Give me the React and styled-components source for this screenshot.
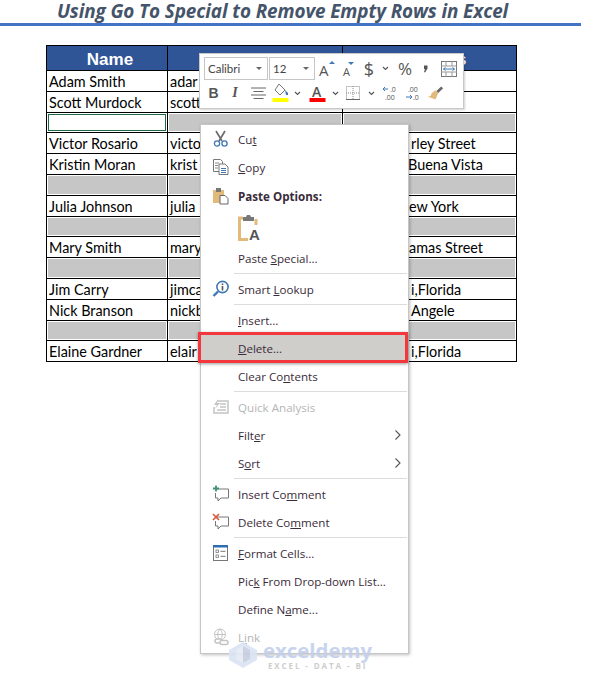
import React from "react";
import styled, { createGlobalStyle } from "styled-components";

const Global = createGlobalStyle`
  html, body { margin: 0; padding: 0; background: #fff; }
  body { width: 603px; height: 684px; overflow: hidden; }
`;

const Page = styled.div`
  position: relative;
  width: 603px;
  height: 684px;
  background: #fff;
`;

const Title = styled.h1`
  margin: 0;
  width: 565px;
  height: 23px;
  font: italic 700 18.9px/22px "Open Sans", sans-serif;
  color: #44546a;
  text-align: center;
  letter-spacing: -0.1px;
  white-space: nowrap;
`;

const TitleRule = styled.div`
  width: 581px;
  height: 3px;
  background: #4472c4;
`;

const Table = styled.div`
  margin: 19px 0 0 46px;
  width: 471px;
  border: 1px solid #000;
  border-bottom: 0;
  box-sizing: border-box;
  font: 400 14.4px "Lato", sans-serif;
  color: #000;
`;

const Row = styled.div`
  display: grid;
  grid-template-columns: 121px 175px 1fr;
  height: ${(p) => (p.$head ? "25px" : "20.8px")};
  box-sizing: border-box;
  border-bottom: 1px solid #000;
`;

const Cell = styled.div`
  display: flex;
  align-items: center;
  padding: 1px 0 0 ${(p) => p.$pad ?? 2}px;
  white-space: nowrap;
  overflow: hidden;
  box-sizing: border-box;
  border-right: ${(p) => (p.$last ? "0" : "1px solid #000")};
`;

const HeadCell = styled(Cell)`
  background: #2f5597;
  color: #fff;
  font: 700 17px "Liberation Sans", sans-serif;
  justify-content: center;
  padding: 4px 0 0 6px;
`;

const BlankCell = styled.div`
  border-right: ${(p) => (p.$last ? "0" : "1px solid #000")};
  padding: 1px;
  box-sizing: border-box;
  min-height: 0;
`;

const BlankFill = styled.div`
  height: 100%;
  box-sizing: border-box;
  background: ${(p) => (p.$active ? "#fff" : "#c6c6c6")};
  border: ${(p) => (p.$active ? "1px solid #1d6b45" : "0")};
`;

const MiniBar = styled.div`
  position: absolute;
  left: 199px;
  top: 53px;
  width: 265px;
  height: 56px;
  box-sizing: border-box;
  background: #fff;
  border: 1px solid #c8c8c8;
  box-shadow: 1px 1px 2px rgba(0, 0, 0, 0.18);
  padding: 3px 4px 0;
`;

const MiniRow = styled.div`
  display: flex;
  align-items: center;
  height: ${(p) => p.$h}px;
  margin-bottom: 1px;
`;

const Combo = styled.div`
  flex: none;
  display: flex;
  align-items: center;
  justify-content: space-between;
  width: ${(p) => p.$w}px;
  height: 23px;
  box-sizing: border-box;
  border: 1px solid #c6c6c6;
  margin-right: 1px;
  padding: 0 5px 0 3px;
  font: 400 11.5px "Lato", sans-serif;
  color: #444;
`;

const Caret = styled.span`
  width: 0;
  height: 0;
  border-left: 3px solid transparent;
  border-right: 3px solid transparent;
  border-top: 3px solid #666;
`;

const Tool = styled.div`
  flex: none;
  display: flex;
  align-items: center;
  justify-content: center;
  width: ${(p) => p.$w}px;
  height: 22px;
  margin-left: ${(p) => p.$ml || 0}px;
  color: #555;
  font: ${(p) => p.$font || "400 15px 'Open Sans', sans-serif"};
`;

const Menu = styled.div`
  position: absolute;
  left: 200px;
  top: 124px;
  width: 209px;
  height: 530px;
  box-sizing: border-box;
  background: #fff;
  border: 1px solid #c6c6c6;
  box-shadow: 1px 1px 3px rgba(0, 0, 0, 0.25);
  font: 400 11.6px "Open Sans", sans-serif;
  color: #3a2b3a;
`;

const Item = styled.div`
  position: relative;
  display: flex;
  align-items: center;
  height: ${(p) => p.$h || 28}px;
  padding-left: 37px;
  white-space: pre;
  color: ${(p) => (p.$off ? "#b5b5b5" : "inherit")};
  font-weight: ${(p) => (p.$bold ? 700 : 400)};
  background: ${(p) => (p.$hot ? "#cfcecb" : "transparent")};
`;

const ItemIcon = styled.span`
  position: absolute;
  left: 11px;
  top: 50%;
  transform: translateY(-50%);
  width: 18px;
  height: 18px;
  display: block;
`;

const Chevron = styled.svg`
  position: absolute;
  right: 6px;
  top: 50%;
  transform: translateY(-50%);
`;

const Sep = styled.div`
  height: 1px;
  margin: 1px 1px 1px 33px;
  background: #dcdcdc;
`;

const PasteBox = styled.div`
  height: 33px;
  padding-left: 37px;
  display: flex;
  align-items: center;
`;

const HotFrame = styled.div`
  position: absolute;
  left: -3px;
  top: 207px;
  width: 210px;
  height: 31px;
  box-sizing: border-box;
  border: 3px solid #f4373d;
  box-shadow: 0 1px 3px rgba(0, 0, 0, 0.4);
  pointer-events: none;
`;

const Mark = styled.div`
  position: absolute;
  left: 229px;
  top: 639px;
  display: flex;
  align-items: center;
  gap: 6px;
  opacity: 0.9;
`;

const MarkText = styled.div`
  display: flex;
  flex-direction: column;
  align-items: center;
`;

const MarkName = styled.div`
  font: 700 20.4px/22px "Open Sans", sans-serif;
  color: #c3d0ec;
`;

const MarkSub = styled.div`
  font: 700 8px/9px "Open Sans", sans-serif;
  color: #c9c9c9;
  letter-spacing: 1.9px;
  white-space: pre;
`;

const Scissors = () => (
  <svg width="18" height="18" viewBox="0 0 18 18" fill="none">
    <path d="M4 1l6 10M13 1L7 11" stroke="#6d6d6d" strokeWidth="1.7" />
    <circle cx="5" cy="13.5" r="2.6" stroke="#3f78b5" strokeWidth="1.3" />
    <circle cx="12.5" cy="13.5" r="2.6" stroke="#3f78b5" strokeWidth="1.3" />
  </svg>
);

const CopyIcon = () => (
  <svg width="18" height="18" viewBox="0 0 18 18" fill="#fff">
    <path d="M1.5 1.5h7l2 2v10h-9z" stroke="#777" />
    <path d="M7 6h6l3 3v7.5H7z" stroke="#777" />
    <path d="M3 5h4M3 7.5h3M3 10h3" stroke="#888" />
    <path d="M9 10.5h5M9 12.5h5M9 14.5h5" stroke="#3f78b5" />
  </svg>
);

const PasteIcon = () => (
  <svg width="18" height="18" viewBox="0 0 18 18">
    <rect x="1" y="3" width="11" height="13" fill="#e2bb7c" />
    <rect x="4" y="1" width="5" height="4" fill="#777" />
    <path d="M8 8.5h5l3 3v5.5H8z" fill="#fff" stroke="#666" />
  </svg>
);

const PasteText = () => (
  <svg width="24" height="28" viewBox="0 0 24 28">
    <path d="M5 4H1.5v21.5H18V5" fill="none" stroke="#e2bb7c" strokeWidth="3" />
    <path d="M5 3h3l1-2h3l1 2h3v4H5z" fill="#777" />
    <rect x="10" y="11" width="13" height="16" fill="#fff" />
    <text x="11" y="26" fontFamily="Liberation Sans" fontWeight="700" fontSize="15" fill="#555">A</text>
  </svg>
);

const SearchInfo = () => (
  <svg width="18" height="18" viewBox="0 0 18 18" fill="none">
    <circle cx="10.5" cy="7" r="5.6" stroke="#3f78b5" strokeWidth="1.6" />
    <path d="M6 11.5L1.5 16" stroke="#3f78b5" strokeWidth="2.4" />
    <path d="M10.5 3.5v1.4M10.5 6v4.5" stroke="#555" strokeWidth="1.6" />
  </svg>
);

const QuickIcon = () => (
  <svg width="18" height="18" viewBox="0 0 18 18" fill="none">
    <path d="M5 3h11v12H2V9" stroke="#c4c4c4" strokeWidth="1.5" />
    <path d="M8 6h6M8 9h6M5 12h9" stroke="#c4c4c4" strokeWidth="1.3" />
    <path d="M6 1L2 7h3l-2 4 5-6H5z" fill="#c4c4c4" />
  </svg>
);

const CommentIcon = ({ del }) => (
  <svg width="18" height="18" viewBox="0 0 18 18" fill="none">
    <path d="M5 4h11.5v9H9l-3 3v-3H3.5V8" stroke="#777" />
    {del ? (
      <path d="M1 1l6 6M7 1L1 7" stroke="#d9573a" strokeWidth="1.6" />
    ) : (
      <path d="M4 0.5v6M1 3.5h6" stroke="#3f9277" strokeWidth="1.8" />
    )}
  </svg>
);

const FormatIcon = () => (
  <svg width="18" height="18" viewBox="0 0 18 18" fill="none">
    <rect x="1.5" y="2.5" width="14" height="14" stroke="#777" />
    <rect x="1" y="1" width="15" height="2.5" fill="#2f6db2" />
    <rect x="4" y="6" width="2.5" height="2.5" stroke="#777" strokeWidth="0.8" />
    <rect x="4" y="11" width="2.5" height="2.5" stroke="#777" strokeWidth="0.8" />
    <path d="M8.5 7.3h5M8.5 12.3h5" stroke="#777" />
  </svg>
);

const LinkIcon = () => (
  <svg width="18" height="18" viewBox="0 0 18 18" fill="none" stroke="#c4c4c4">
    <circle cx="8" cy="6.5" r="5.5" />
    <path d="M2.5 6.5h11M8 1c-3 3-3 8 0 11M8 1c3 3 3 8 0 11" />
    <rect x="3" y="11" width="7" height="4" rx="2" strokeWidth="1.5" fill="#fff" />
    <rect x="8" y="12.5" width="8" height="4" rx="2" strokeWidth="1.5" fill="#fff" />
  </svg>
);

const Arrow = () => (
  <Chevron width="8" height="12" viewBox="0 0 8 12" fill="none">
    <path d="M1.5 1.5L6 6l-4.5 4.5" stroke="#555" strokeWidth="1.1" />
  </Chevron>
);

const SmallCaret = () => (
  <svg width="7" height="5" viewBox="0 0 7 5" fill="none">
    <path d="M1 1l2.5 2.5L6 1" stroke="#555" strokeWidth="1.1" />
  </svg>
);

const rows = [
  ["Adam Smith", "adar", ""],
  ["Scott Murdock", "scott", ""],
  "active",
  ["Victor Rosario", "victo", "rley Street", 68],
  ["Kristin Moran", "krist", "Buena Vista", 65],
  "blank",
  ["Julia Johnson", "julia", "ew York", 66],
  "blank",
  ["Mary Smith", "mary", "hamas Street", 58],
  "blank",
  ["Jim Carry", "jimca", "i,Florida", 68],
  ["Nick Branson", "nickb", "Angele", 68],
  "blank",
  ["Elaine Gardner", "elair", "i,Florida", 68],
];

export default function App() {
  return (
    <Page>
      <Global />
      <Title>Using Go To Special to Remove Empty Rows in Excel</Title>
      <TitleRule />
      <Table>
        <Row $head>
          <HeadCell>Name</HeadCell>
          <HeadCell>Email</HeadCell>
          <HeadCell $last>Address</HeadCell>
        </Row>
        {rows.map((r, i) =>
          typeof r === "string" ? (
            <Row key={i}>
              <BlankCell><BlankFill $active={r === "active"} /></BlankCell>
              <BlankCell><BlankFill /></BlankCell>
              <BlankCell $last><BlankFill /></BlankCell>
            </Row>
          ) : (
            <Row key={i}>
              <Cell>{r[0]}</Cell>
              <Cell>{r[1]}</Cell>
              <Cell $last $pad={r[3]}>{r[2]}</Cell>
            </Row>
          )
        )}
      </Table>

      <MiniBar>
        <MiniRow $h={23}>
          <Combo $w={64}>Calibri<Caret /></Combo>
          <Combo $w={46}>12<Caret /></Combo>
          <Tool $w={20} $ml={2}>
            <svg width="20" height="20" viewBox="0 0 20 20">
              <text x="1" y="17" fontFamily="Open Sans" fontSize="15" fill="#555">A</text>
              <path d="M11 5l3-3 3 3z" fill="#3f78b5" />
            </svg>
          </Tool>
          <Tool $w={18} $ml={3}>
            <svg width="18" height="20" viewBox="0 0 18 20">
              <text x="2" y="17" fontFamily="Open Sans" fontSize="11" fill="#555">A</text>
              <path d="M7 3h6l-3 3z" fill="#3f78b5" />
            </svg>
          </Tool>
          <Tool $w={16} $ml={2} $font="400 18px 'Open Sans', sans-serif">$</Tool>
          <Tool $w={12} $ml={2}><SmallCaret /></Tool>
          <Tool $w={26} $ml={1} $font="400 17px 'Open Sans', sans-serif">%</Tool>
          <Tool $w={16}>
            <svg width="8" height="10" viewBox="0 0 8 10">
              <path d="M2 1.5h3.5v3L3 8.5 2 8l1-3H2z" fill="#555" />
            </svg>
          </Tool>
          <Tool $w={24} $ml={3}>
            <svg width="16" height="16" viewBox="0 0 16 16" fill="none">
              <rect x="0.5" y="0.5" width="15" height="15" stroke="#777" />
              <path d="M0 5h16M0 11h16M5 0v5M11 0v5M5 11v5M11 11v5" stroke="#999" />
              <path d="M2.5 8h11M2.5 8l2-1.5M2.5 8l2 1.5M13.5 8l-2-1.5M13.5 8l-2 1.5" stroke="#3f78b5" />
            </svg>
          </Tool>
        </MiniRow>
        <MiniRow $h={24}>
          <Tool $w={19} $font="700 14px 'Liberation Sans', sans-serif">B</Tool>
          <Tool $w={24} $font="italic 700 14px 'Liberation Serif', serif">I</Tool>
          <Tool $w={22}>
            <svg width="15" height="12" viewBox="0 0 15 12">
              <path d="M0 1h15M2.5 4.5h10M0 8h15M2.5 11.5h10" stroke="#666" />
            </svg>
          </Tool>
          <Tool $w={22}>
            <svg width="17" height="20" viewBox="0 0 17 20" fill="none">
              <path d="M7 1l6 6-5 5-5-5z" stroke="#777" fill="#fff" />
              <path d="M13 7l3 3v2h-2z" fill="#3f78b5" />
              <rect x="0.5" y="15" width="16" height="4" fill="#ffff00" />
            </svg>
          </Tool>
          <Tool $w={12}><SmallCaret /></Tool>
          <Tool $w={28}>
            <svg width="17" height="20" viewBox="0 0 17 20">
              <text x="3" y="14" fontFamily="Open Sans" fontWeight="600" fontSize="14" fill="#555">A</text>
              <rect x="0.5" y="15" width="16" height="4" fill="#ff0000" />
            </svg>
          </Tool>
          <Tool $w={8}><SmallCaret /></Tool>
          <Tool $w={28}>
            <svg width="14" height="14" viewBox="0 0 14 14" fill="none">
              <rect x="0.5" y="0.5" width="13" height="13" stroke="#888" strokeDasharray="1 1" />
              <path d="M7 0v14M0 7h14" stroke="#888" strokeDasharray="1 1" />
              <path d="M0 13.5h14" stroke="#666" />
            </svg>
          </Tool>
          <Tool $w={8}><SmallCaret /></Tool>
          <Tool $w={30}>
            <svg width="16" height="16" viewBox="0 0 16 16">
              <path d="M6 4H1M1 4l2-2M1 4l2 2" stroke="#3f78b5" fill="none" />
              <text x="8" y="7" fontFamily="Open Sans" fontSize="7" fill="#555">.0</text>
              <text x="3" y="15" fontFamily="Open Sans" fontSize="7" fill="#555">.00</text>
            </svg>
          </Tool>
          <Tool $w={16}>
            <svg width="16" height="16" viewBox="0 0 16 16">
              <text x="3" y="7" fontFamily="Open Sans" fontSize="7" fill="#555">.00</text>
              <path d="M1 12h6M7 12l-2-2M7 12l-2 2" stroke="#3f78b5" fill="none" />
              <text x="8" y="15" fontFamily="Open Sans" fontSize="7" fill="#555">.0</text>
            </svg>
          </Tool>
          <Tool $w={28}>
            <svg width="17" height="16" viewBox="0 0 18 16">
              <path d="M9 5l3 3-3 7-8-3 3-1 1-3z" fill="#e2bb7c" />
              <path d="M10 6l5-5 2 2-5 5z" fill="#666" />
            </svg>
          </Tool>
        </MiniRow>
      </MiniBar>

      <Menu>
        <Item><ItemIcon><Scissors /></ItemIcon><span>Cu<u>t</u></span></Item>
        <Item><ItemIcon><CopyIcon /></ItemIcon><span><u>C</u>opy</span></Item>
        <Item $bold $h={30}><ItemIcon><PasteIcon /></ItemIcon>Paste Options:</Item>
        <PasteBox><PasteText /></PasteBox>
        <Item><span>Paste <u>S</u>pecial...</span></Item>
        <Sep />
        <Item><ItemIcon><SearchInfo /></ItemIcon><span>Smart <u>L</u>ookup</span></Item>
        <Sep />
        <Item><span><u>I</u>nsert...</span></Item>
        <Item $hot><span><u>D</u>elete...</span></Item>
        <Item><span>Clear Co<u>n</u>tents</span></Item>
        <Sep />
        <Item $off><ItemIcon><QuickIcon /></ItemIcon>Quick Analysis</Item>
        <Item><span>Filt<u>e</u>r</span><Arrow /></Item>
        <Item><span>S<u>o</u>rt</span><Arrow /></Item>
        <Sep />
        <Item><ItemIcon><CommentIcon /></ItemIcon><span>Insert Co<u>m</u>ment</span></Item>
        <Item><ItemIcon><CommentIcon del /></ItemIcon><span>Delete Co<u>m</u>ment</span></Item>
        <Sep />
        <Item><ItemIcon><FormatIcon /></ItemIcon><span><u>F</u>ormat Cells...</span></Item>
        <Item><span>Pic<u>k</u> From Drop-down List...</span></Item>
        <Item><span>Define N<u>a</u>me...</span></Item>
        <Item $off><ItemIcon><LinkIcon /></ItemIcon><span>L<u>i</u>nk</span></Item>
        <HotFrame />
      </Menu>

      <Mark>
        <svg width="28" height="26" viewBox="0 0 28 26">
          <path d="M14 0l14 8v10l-14 8L0 18V8z" fill="#dbe4f5" />
          <path d="M14 4l7 4v9l-7 4z" fill="#c6cfe0" />
          <path d="M14 4L7 8v9l7 4z" fill="#e6ebf5" />
        </svg>
        <MarkText>
          <MarkName>exceldemy</MarkName>
          <MarkSub>EXCEL - DATA - BI</MarkSub>
        </MarkText>
      </Mark>
    </Page>
  );
}
